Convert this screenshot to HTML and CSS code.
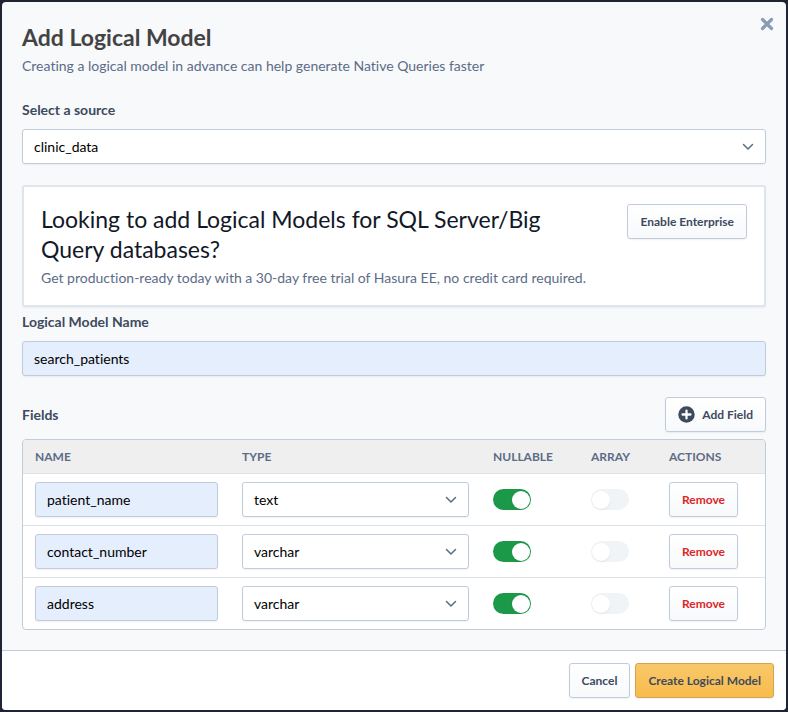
FILE: index.html
```html
<!DOCTYPE html>
<html lang="en">
<head>
<meta charset="utf-8">
<meta name="viewport" content="width=device-width, initial-scale=1">
<title>Add Logical Model</title>
<link rel="stylesheet" href="styles.css">
</head>
<body>
<svg class="sprite" aria-hidden="true">
  <symbol id="chevron" viewBox="0 0 12 8"><path d="M1.5 1.5 6 6l4.500-4.500" fill="none" stroke="currentColor" stroke-width="1.5" stroke-linecap="round" stroke-linejoin="round"/></symbol>
</svg>
<main class="dialog" role="dialog" aria-labelledby="title">
  <form class="form">
    <div class="content">
      <header class="header">
        <div>
          <h1 class="title" id="title">Add Logical Model</h1>
          <p class="subtitle">Creating a logical model in advance can help generate Native Queries faster</p>
        </div>
        <button class="close" type="button" aria-label="Close">
          <svg width="14" height="14" viewBox="0 0 14 14"><path d="M2.500 2.500l9 9M11.500 2.500l-9 9" stroke="currentColor" stroke-width="3.200" stroke-linecap="round"/></svg>
        </button>
      </header>

      <div class="field">
        <label class="label" for="source">Select a source</label>
        <div class="select">
          <select class="control" id="source"><option>clinic_data</option></select>
          <svg class="chevron"><use href="#chevron"/></svg>
        </div>
      </div>

      <section class="promo">
        <div class="promo-text">
          <h2 class="promo-title">Looking to add Logical Models for SQL Server/Big Query databases?</h2>
          <p class="promo-note">Get production-ready today with a 30-day free trial of Hasura EE, no credit card required.</p>
        </div>
        <button class="button" type="button">Enable Enterprise</button>
      </section>

      <div class="field">
        <label class="label" for="model">Logical Model Name</label>
        <input class="control filled" id="model" type="text" value="search_patients">
      </div>

      <div class="fields-bar">
        <h3 class="label" id="fields">Fields</h3>
        <button class="button" type="button">
          <svg width="17" height="17" viewBox="0 0 18 18"><circle cx="9" cy="9" r="8.700" fill="currentColor"/><path d="M9 4.800v8.400M4.800 9h8.400" stroke="#fff" stroke-width="2.400" stroke-linecap="round"/></svg>
          Add Field
        </button>
      </div>

      <div class="table-box">
        <table class="table" aria-labelledby="fields">
          <colgroup><col class="col-name"><col><col class="col-nullable"><col class="col-array"><col class="col-actions"></colgroup>
          <thead>
            <tr><th>NAME</th><th>TYPE</th><th>NULLABLE</th><th>ARRAY</th><th>ACTIONS</th></tr>
          </thead>
          <tbody>
            <tr>
              <td><input class="control filled" type="text" value="patient_name" aria-label="Name"></td>
              <td><div class="select"><select class="control" aria-label="Type"><option>text</option></select><svg class="chevron"><use href="#chevron"/></svg></div></td>
              <td><input class="switch" type="checkbox" role="switch" aria-label="Nullable" checked></td>
              <td><input class="switch" type="checkbox" role="switch" aria-label="Array"></td>
              <td><button class="button danger" type="button">Remove</button></td>
            </tr>
            <tr>
              <td><input class="control filled" type="text" value="contact_number" aria-label="Name"></td>
              <td><div class="select"><select class="control" aria-label="Type"><option>varchar</option></select><svg class="chevron"><use href="#chevron"/></svg></div></td>
              <td><input class="switch" type="checkbox" role="switch" aria-label="Nullable" checked></td>
              <td><input class="switch" type="checkbox" role="switch" aria-label="Array"></td>
              <td><button class="button danger" type="button">Remove</button></td>
            </tr>
            <tr>
              <td><input class="control filled" type="text" value="address" aria-label="Name"></td>
              <td><div class="select"><select class="control" aria-label="Type"><option>varchar</option></select><svg class="chevron"><use href="#chevron"/></svg></div></td>
              <td><input class="switch" type="checkbox" role="switch" aria-label="Nullable" checked></td>
              <td><input class="switch" type="checkbox" role="switch" aria-label="Array"></td>
              <td><button class="button danger" type="button">Remove</button></td>
            </tr>
          </tbody>
        </table>
      </div>
    </div>

    <footer class="footer">
      <button class="button" type="button">Cancel</button>
      <button class="button primary" type="submit">Create Logical Model</button>
    </footer>
  </form>
</main>
</body>
</html>
```
FILE: styles.css
```css
* {
  box-sizing: border-box;
}

body {
  margin: 0;
  padding: 2px;
  background: #1f2434;
  color: #3e4a5d;
  font: 14px/20px Lato, "Noto Sans", sans-serif;
  font-variant-ligatures: none;
}

h1, h2, h3, p {
  margin: 0;
}

button, input, select {
  margin: 0;
  font: inherit;
  font-variant-ligatures: none;
}

.sprite {
  display: none;
}

.dialog {
  overflow: hidden;
  border-radius: 4px;
  background: #f8f9fb;
}

.content {
  padding: 20px;
}

.header {
  display: flex;
  justify-content: space-between;
  align-items: flex-start;
  margin-bottom: 24px;
}

.title {
  margin-bottom: 4px;
  color: #434343;
  font-size: 23px;
  line-height: 30px;
}

.subtitle, .promo-note {
  color: #5c6c87;
}

.close {
  display: flex;
  margin: -5px -8px 0 0;
  padding: 0;
  border: 0;
  background: none;
  color: #8b9bb2;
}

.label {
  display: block;
  font-size: 14px;
  font-weight: 700;
}

.field .label {
  margin-bottom: 9px;
}

.control {
  display: block;
  width: 100%;
  height: 35px;
  padding: 0 11px;
  border: 1px solid #c0ccdb;
  border-radius: 3px;
  background: #fff;
  color: #000;
  box-shadow: 0 1px 2px rgba(15, 23, 42, 0.06);
  appearance: none;
}

.filled {
  background: #e5eefd;
}

.select {
  display: grid;
  align-items: center;
}

.select > * {
  grid-area: 1 / 1;
}

.chevron {
  justify-self: end;
  width: 12px;
  height: 8px;
  margin-right: 12px;
  color: #5c6c87;
  pointer-events: none;
}

.promo {
  display: flex;
  justify-content: space-between;
  align-items: flex-start;
  gap: 40px;
  margin: 21px 0 5px;
  padding: 17px;
  border: 2px solid #dfe5ec;
  border-radius: 3px;
  background: #fff;
  box-shadow: 0 1px 2px rgba(15, 23, 42, 0.06);
}

.promo-title {
  margin-bottom: 4px;
  color: #111827;
  font-size: 23px;
  font-weight: 400;
  line-height: 30px;
}

.button {
  display: inline-flex;
  align-items: center;
  justify-content: center;
  flex: none;
  gap: 7px;
  height: 35px;
  padding: 0 12px;
  border: 1px solid #c0ccdb;
  border-radius: 3px;
  background: linear-gradient(#fff, #f7f9fb);
  color: #3e4a5d;
  font-size: 12px;
  font-weight: 700;
  box-shadow: 0 1px 2px rgba(15, 23, 42, 0.06);
}

.danger {
  color: #dc2626;
}

.primary {
  border-color: #d6a44a;
  background: linear-gradient(#f9c86b, #f7bc4b);
}

.fields-bar {
  display: flex;
  justify-content: space-between;
  align-items: center;
  margin: 21px 0 7px;
}

.table-box {
  overflow: hidden;
  border: 1px solid #c0ccdb;
  border-radius: 4px;
  background: #fff;
}

.table {
  width: 100%;
  border-spacing: 0;
  table-layout: fixed;
}

.col-name {
  width: 207px;
}

.col-nullable {
  width: 98px;
}

.col-array {
  width: 78px;
}

.col-actions {
  width: 108px;
}

th {
  height: 34px;
  padding: 0 12px;
  border-bottom: 1px solid #dde3eb;
  background: #efefef;
  color: #5c6c87;
  font-size: 12px;
  text-align: left;
}

td {
  padding: 8px 12px;
  border-bottom: 1px solid #dde3eb;
}

tr:last-child td {
  border-bottom: 0;
}

td .button {
  display: flex;
}

.switch {
  display: flex;
  align-items: center;
  width: 38px;
  height: 21px;
  padding: 0 1px;
  border-radius: 11px;
  background: #f1f4f7;
  appearance: none;
}

.switch::before {
  content: "";
  width: 18px;
  height: 18px;
  border-radius: 50%;
  background: #fff;
  box-shadow: 0 1px 2px rgba(15, 23, 42, 0.08);
}

.switch:checked {
  justify-content: flex-end;
  background: #1c9849;
}

.footer {
  display: flex;
  justify-content: flex-end;
  gap: 5px;
  padding: 12px;
  border-top: 1px solid #c0ccdb;
  background: #fff;
}
```
